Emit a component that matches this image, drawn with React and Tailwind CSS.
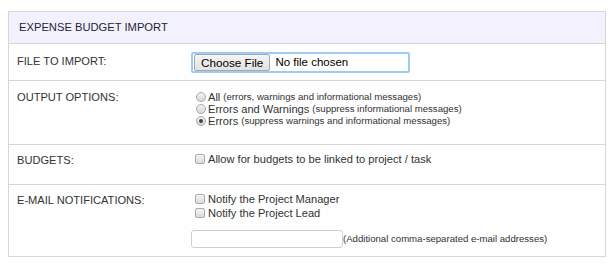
const Radio = ({ checked }) => (
  <span className="inline-flex w-[10px] h-[10px] ml-[5px] mr-[2px] rounded-full border border-[#a9a9a9] bg-gradient-to-b from-[#f4f4f4] to-[#d6d6d6] items-center justify-center shrink-0">
    {checked && <span className="w-[4px] h-[4px] rounded-full bg-[#444]" />}
  </span>
);

const Check = () => (
  <span className="inline-block w-[10px] h-[10px] ml-[4px] mr-[3px] rounded-[2px] border border-[#a9a9a9] bg-gradient-to-b from-[#f6f6f6] to-[#dadada] shrink-0" />
);

const Row = ({ label, children, className }) => (
  <div className={`flex border-t border-[#d6d6d6] ${className}`}>
    <div className="w-[182px] pl-[8px] shrink-0 text-[11.1px] text-[#333]">{label}</div>
    <div className="flex-1">{children}</div>
  </div>
);

const App = () => {
  return (
    <div className="bg-white w-[616px] h-[265px] pt-[11px] pl-[8px]" style={{ fontFamily: '"Liberation Sans", Arial, sans-serif' }}>
      <div className="w-[598px] border border-[#d6d6d6] bg-[#fdfefd]">
        <div className="h-[31px] bg-[#f3f1fd] pl-[10px] flex items-center text-[11.2px] text-[#22263a]">
          EXPENSE BUDGET IMPORT
        </div>

        <Row label={<div className="pt-[9px]">FILE TO IMPORT:</div>} className="h-[37px]">
          <div className="pt-[8px]">
            <div className="w-[219px] h-[21px] border-2 border-[#9ecbf2] rounded-[2px] flex items-center pl-[1px] bg-white">
              <span className="h-[17px] px-[6px] border border-[#a8a8a8] rounded-[2px] bg-gradient-to-b from-[#f4f4f4] to-[#e2e2e2] text-[11.7px] text-black leading-[15px]">
                Choose File
              </span>
              <span className="ml-[5px] text-[11.5px] text-black">No file chosen</span>
            </div>
          </div>
        </Row>

        <Row label={<div className="pt-[8px]">OUTPUT OPTIONS:</div>} className="h-[64px]">
          <div className="pt-[10px] text-[11.1px] text-[#333] leading-[12px]">
            <div className="flex items-center">
              <Radio />All<span className="text-[9.6px] ml-[3px]">(errors, warnings and informational messages)</span>
            </div>
            <div className="flex items-center">
              <Radio />Errors and Warnings<span className="text-[9.6px] ml-[3px]">(suppress informational messages)</span>
            </div>
            <div className="flex items-center">
              <Radio checked />Errors<span className="text-[9.6px] ml-[3px]">(suppress warnings and informational messages)</span>
            </div>
          </div>
        </Row>

        <Row label={<div className="pt-[7px]">BUDGETS:</div>} className="h-[40px]">
          <div className="pt-[7px] text-[11.1px] text-[#333] leading-[14px] flex items-center">
            <Check />Allow for budgets to be linked to project / task
          </div>
        </Row>

        <Row label={<div className="pt-[7px]">E-MAIL NOTIFICATIONS:</div>} className="h-[72px]">
          <div className="pt-[7px] text-[11.1px] text-[#333] leading-[14px]">
            <div className="flex items-center">
              <Check />Notify the Project Manager
            </div>
            <div className="flex items-center">
              <Check />Notify the Project Lead
            </div>
            <div className="flex items-center mt-[10px]">
              <span className="w-[152px] h-[18px] border border-[#cfcfcf] rounded-[3px] bg-white" />
              <span className="text-[9.6px] text-[#333]">(Additional comma-separated e-mail addresses)</span>
            </div>
          </div>
        </Row>
      </div>
    </div>
  );
};

export default App;
